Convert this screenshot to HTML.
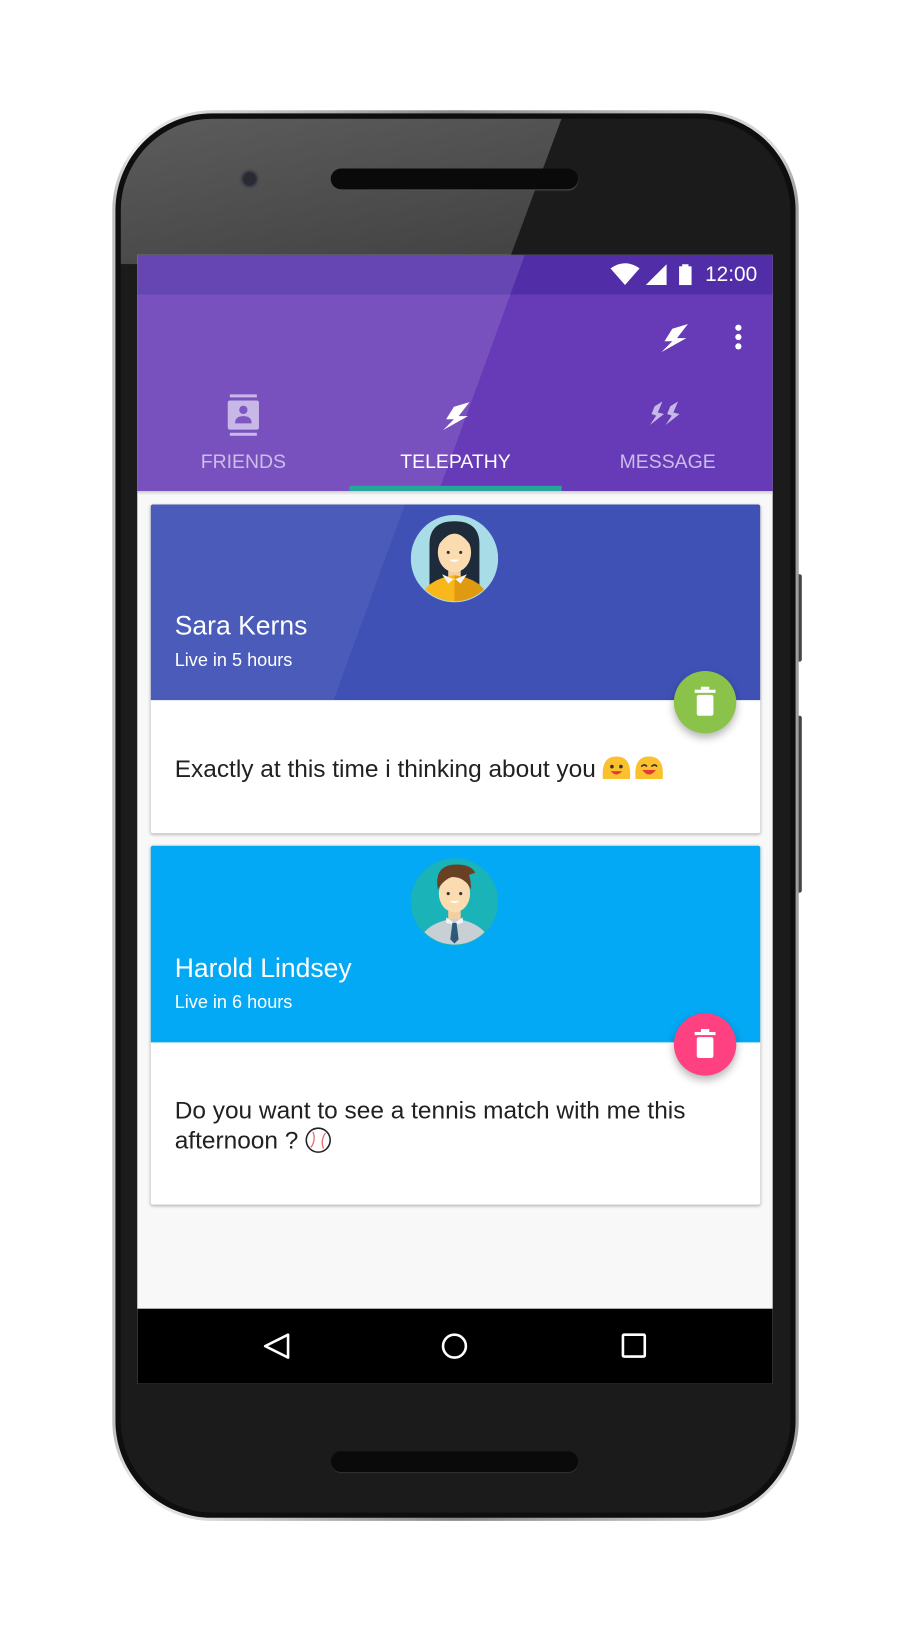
<!DOCTYPE html>
<html><head><meta charset="utf-8"><style>
*{margin:0;padding:0;box-sizing:border-box}
html,body{width:911px;height:1626px;background:#fff;overflow:hidden}
#w{position:absolute;left:0;top:0;width:876px;height:1563px;transform:scale(1.03995,1.0403);transform-origin:0 0;font-family:"Liberation Sans",sans-serif}
.a{position:absolute}
</style></head><body><div id="w">
<div class="a" style="left:764px;top:552px;width:7px;height:84px;background:#444;border-radius:2px"></div>
<div class="a" style="left:764px;top:688px;width:7px;height:170px;background:#444;border-radius:2px"></div>
<div class="a" style="left:108px;top:106px;width:660px;height:1356px;border-radius:96px;background:linear-gradient(90deg,#bbb,#eee 3%,#888 50%,#ddd 97%,#999);"></div>
<div class="a" style="left:111px;top:109px;width:654px;height:1350px;border-radius:93px;background:#0e0e0e"></div>
<div class="a" style="left:116px;top:114px;width:644px;height:1340px;border-radius:89px;background:#1b1b1b;overflow:hidden">
 <div class="a" style="left:0;top:0;width:644px;height:140px;background:linear-gradient(170deg,#5c5c5c,#3c3c3c);clip-path:polygon(0 0,424px 0,372px 140px,0 140px)"></div>
</div>
<div class="a" style="left:318px;top:162px;width:238px;height:20px;border-radius:10px;background:#0a0a0a;box-shadow:0 1px 1px #555"></div>
<div class="a" style="left:230px;top:162px;width:20px;height:20px;border-radius:50%;background:radial-gradient(circle,#2a2a35 40%,#4a4a50 60%,#555 100%)"></div>
<div class="a" style="left:318px;top:1395px;width:238px;height:20px;border-radius:10px;background:#0a0a0a;box-shadow:0 1px 1px #333"></div>
<div class="a" style="left:132px;top:245px;width:611px;height:1085px;background:#f8f8f8;overflow:hidden">
 <div class="a" style="left:0;top:0;width:611px;height:227px;background:#673ab7"></div>
 <div class="a" style="left:0;top:0;width:611px;height:38px;background:#512da8"></div>
 <div class="a" style="left:-200px;top:0;width:490px;height:227px;background:rgba(255,255,255,0.12);transform:skewX(-20deg);transform-origin:0 100%"></div>
 <svg class="a" style="left:455px;top:6px" width="140" height="26" viewBox="0 0 140 26">
  <path d="M0 7 Q14 -3 28 7 L14 23Z" fill="#fff"/>
  <path d="M34 23 L54 3 L54 23Z" fill="#fff"/>
  <rect x="66" y="5" width="12" height="18" fill="#fff"/><rect x="69" y="3" width="6" height="3" fill="#fff"/>
 </svg>
 <div class="a" style="left:546px;top:8px;color:#fff;font-size:20px">12:00</div>
 <svg class="a" style="left:498px;top:62px" width="36" height="36" viewBox="0 0 24 24"><path d="M9 3 L19 0 L12 9 L18 9 L2 18 L9 11 L4 11Z" fill="#fff" transform="translate(2 3)"/></svg>
 <div class="a" style="left:575px;top:67px;width:6px;height:6px;border-radius:50%;background:#fff;box-shadow:0 9px 0 #fff,0 18px 0 #fff"></div>
 <svg class="a" style="left:86px;top:134px" width="32" height="40" viewBox="0 0 32 40"><g fill="#c8b8e8"><rect x="3" y="0" width="26" height="3"/><rect x="3" y="37" width="26" height="3"/><rect x="1" y="6" width="30" height="28" rx="2"/></g><circle cx="16" cy="15" r="4" fill="#7e57c2"/><path d="M8 28 Q8 21 16 21 Q24 21 24 28Z" fill="#7e57c2"/></svg>
 <svg class="a" style="left:288px;top:137px" width="36" height="36" viewBox="0 0 24 24"><path d="M9 3 L19 0 L12 9 L18 9 L2 18 L9 11 L4 11Z" fill="#fff" transform="translate(2 3)"/></svg>
 <svg class="a" style="left:490px;top:135px" width="36" height="36" viewBox="0 0 24 24"><g fill="#c8b8e8"><path d="M4 4 L9 1 L6 8 L10 9 L1 16 L5 10 L2 9Z" transform="translate(1 3)"/><path d="M4 4 L9 1 L6 8 L10 9 L1 16 L5 10 L2 9Z" transform="translate(11 3)"/></g></svg>
 <div class="a" style="left:0;top:188px;width:204px;text-align:center;color:#cbbde8;font-size:18.7px">FRIENDS</div>
 <div class="a" style="left:204px;top:188px;width:204px;text-align:center;color:#fff;font-size:18.7px">TELEPATHY</div>
 <div class="a" style="left:408px;top:188px;width:204px;text-align:center;color:#cbbde8;font-size:18.7px">MESSAGE</div>
 <div class="a" style="left:204px;top:222px;width:204px;height:5px;background:#26a69a"></div>
 <div class="a" style="left:0;top:227px;width:611px;height:4px;background:linear-gradient(#ccc,#f8f8f8)"></div>

 <div class="a" style="left:13px;top:240px;width:586px;height:316px;background:#fff;border-radius:2px;box-shadow:0 1px 3px rgba(0,0,0,.3)"></div>
 <div class="a" style="left:13px;top:240px;width:586px;height:188px;background:#3f51b5;border-radius:2px 2px 0 0;overflow:hidden"><div class="a" style="left:-150px;top:0;width:360px;height:188px;background:rgba(255,255,255,0.06);transform:skewX(-20deg)"></div></div>
 <svg class="a" style="left:263px;top:250px" width="84" height="84" viewBox="0 0 84 84"><defs><clipPath id="c1"><circle cx="42" cy="42" r="41"/></clipPath></defs><circle cx="42" cy="42" r="42" fill="#a8dde8"/><g clip-path="url(#c1)"><path d="M18 70 L18 28 Q18 6 42 6 Q66 6 66 28 L66 70Z" fill="#1e2b3a"/><rect x="36" y="48" width="12" height="14" fill="#f5cfa0"/><ellipse cx="42" cy="36" rx="16" ry="19" fill="#fbdcb0"/><path d="M26 30 Q30 12 42 14 Q54 12 58 30 Q50 18 42 18 Q34 18 26 30Z" fill="#1e2b3a"/><path d="M6 90 Q10 62 42 58 Q74 62 78 90Z" fill="#f8b81c"/><path d="M42 58 Q74 62 78 90 L42 90Z" fill="#e09a10"/><path d="M30 57 L42 62 L54 57 L48 66 L42 61 L36 66Z" fill="#f4f4f4"/><circle cx="36" cy="36" r="1.5" fill="#333"/><circle cx="48" cy="36" r="1.5" fill="#333"/><path d="M37 43 Q42 47 47 43Z" fill="#fff"/></g></svg>
 <div class="a" style="left:36px;top:343px;color:#fff;font-size:25.5px">Sara Kerns</div>
 <div class="a" style="left:36px;top:379px;color:#fff;font-size:17.4px">Live in 5 hours</div>
 <div class="a" style="left:36px;top:480px;color:#212121;font-size:23.5px;white-space:nowrap">Exactly at this time i thinking about you<svg width="64" height="26" viewBox="0 0 58 24" style="vertical-align:-4px;margin-left:4px"><path d="M2 22 Q0 2 14 2 Q28 2 26 22Z" fill="#fbc02d"/><circle cx="10" cy="11" r="1.6" fill="#333"/><circle cx="18" cy="11" r="1.6" fill="#333"/><path d="M9 15 Q14 21 19 15Z" fill="#e53935"/><path d="M31 22 Q29 2 43 2 Q57 2 55 22Z" fill="#fbc02d"/><path d="M36 11 Q39 8 41 11 M45 11 Q48 8 50 11" stroke="#333" stroke-width="1.4" fill="none"/><path d="M37 14 Q43 22 49 14Z" fill="#e53935"/></svg></div>
 <div class="a" style="left:516px;top:400px;width:60px;height:60px;border-radius:50%;background:#8bc34a;box-shadow:0 4px 8px rgba(0,0,0,.3)"></div>
 <svg class="a" style="left:535px;top:415px" width="22" height="30" viewBox="0 0 22 30"><rect x="1" y="3" width="20" height="3" fill="#fff"/><rect x="7" y="0" width="8" height="3" fill="#fff"/><rect x="3" y="8" width="16" height="20" rx="2" fill="#fff"/></svg>

 <div class="a" style="left:13px;top:568px;width:586px;height:345px;background:#fff;border-radius:2px;box-shadow:0 1px 3px rgba(0,0,0,.3)"></div>
 <div class="a" style="left:13px;top:568px;width:586px;height:189px;background:#03a9f4;border-radius:2px 2px 0 0"></div>
 <svg class="a" style="left:263px;top:580px" width="84" height="84" viewBox="0 0 84 84"><defs><clipPath id="c2"><circle cx="42" cy="42" r="41"/></clipPath></defs><circle cx="42" cy="42" r="42" fill="#1ab3b8"/><g clip-path="url(#c2)"><rect x="36" y="46" width="12" height="14" fill="#f5cfa0"/><ellipse cx="42" cy="34" rx="15" ry="18" fill="#fbdcb0"/><path d="M26 30 Q22 6 44 6 Q58 6 62 14 L56 16 Q58 22 58 30 Q52 18 40 18 Q32 20 26 30Z" fill="#6a4025"/><path d="M4 92 Q8 62 42 58 Q76 62 80 92Z" fill="#c8d0d6"/><path d="M34 57 L42 62 L50 57 L50 62 L42 64 L34 62Z" fill="#f4f4f4"/><path d="M40 62 L44 62 L46 78 L42 82 L38 78Z" fill="#2d5a78"/><circle cx="36" cy="34" r="1.5" fill="#333"/><circle cx="48" cy="34" r="1.5" fill="#333"/><path d="M37 41 Q42 45 47 41Z" fill="#fff"/></g></svg>
 <div class="a" style="left:36px;top:672px;color:#fff;font-size:25.5px">Harold Lindsey</div>
 <div class="a" style="left:36px;top:708px;color:#fff;font-size:17.4px">Live in 6 hours</div>
 <div class="a" style="left:36px;top:808px;width:525px;color:#212121;font-size:23.5px;line-height:29px">Do you want to see a tennis match with me this afternoon ? <svg width="26" height="26" viewBox="0 0 26 26" style="vertical-align:-5px"><circle cx="13" cy="13" r="11.5" fill="#fff" stroke="#222" stroke-width="1.5"/><path d="M6 20 Q11 13 8 5 M20 6 Q15 13 18 21" stroke="#e57373" stroke-width="1.3" fill="none"/></svg></div>
 <div class="a" style="left:516px;top:729px;width:60px;height:60px;border-radius:50%;background:#ff4081;box-shadow:0 4px 8px rgba(0,0,0,.3)"></div>
 <svg class="a" style="left:535px;top:744px" width="22" height="30" viewBox="0 0 22 30"><rect x="1" y="3" width="20" height="3" fill="#fff"/><rect x="7" y="0" width="8" height="3" fill="#fff"/><rect x="3" y="8" width="16" height="20" rx="2" fill="#fff"/></svg>

 <div class="a" style="left:0;top:1013px;width:611px;height:72px;background:#000"></div>
 <svg class="a" style="left:0;top:1013px" width="611" height="72" viewBox="0 0 611 72"><path d="M145 25 L145 47 L123 36Z" fill="none" stroke="#fff" stroke-width="2.5" stroke-linejoin="round"/><circle cx="305" cy="36" r="11" fill="none" stroke="#fff" stroke-width="2.5"/><rect x="467" y="25" width="21" height="21" fill="none" stroke="#fff" stroke-width="2.5" rx="1"/></svg>
</div>
</div></body></html>
